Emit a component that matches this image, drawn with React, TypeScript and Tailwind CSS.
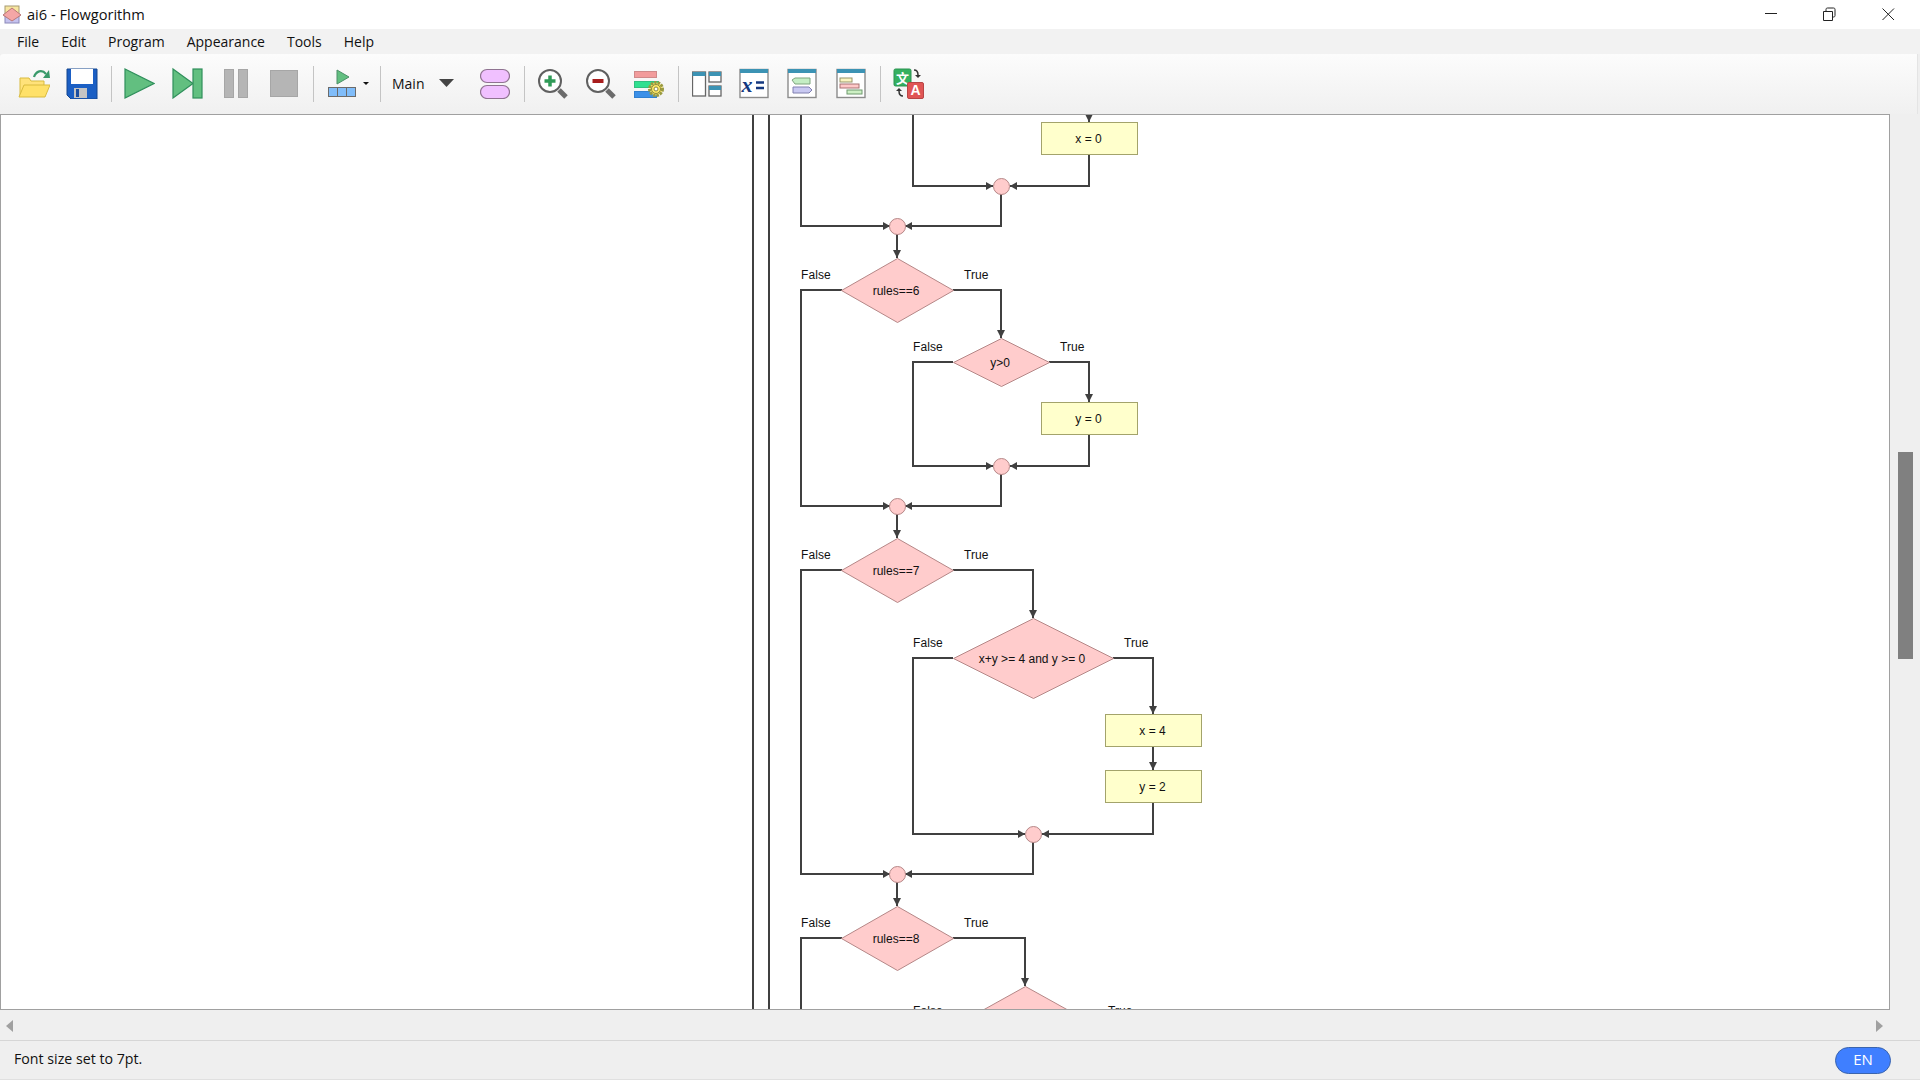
import type { ReactNode } from 'react';

const ui = { fontFamily: '"Open Sans", "Noto Sans", sans-serif' };
const chartFont = '"Liberation Sans", Arial, sans-serif';

const menus = ['File', 'Edit', 'Program', 'Appearance', 'Tools', 'Help'];

function Sep() {
  return <div className="w-px h-[36px] mt-[2px] bg-[#c4c4c4] shrink-0" />;
}

// 48px wide slot, the icon is centered in it
function Tool({ children }: { children: ReactNode }) {
  return <div className="flex items-center justify-center shrink-0 h-[32px] w-[48px]">{children}</div>;
}

function Icon({ children }: { children: ReactNode }) {
  return (
    <svg className="shrink-0" width="32" height="32" viewBox="0 0 32 32">
      {children}
    </svg>
  );
}

function WinFrame({ children }: { children: ReactNode }) {
  return (
    <Icon>
      <rect x="2" y="2.5" width="28" height="28" fill="#fff" stroke="#8c8c8c" strokeWidth="1.4" />
      <rect x="2" y="2" width="28" height="4" fill="#3c93b4" />
      {children}
    </Icon>
  );
}

function Logo() {
  return (
    <svg width="20" height="20" viewBox="0 0 20 20">
      <rect x="3" y="1" width="14" height="10" fill="#f7e6a0" stroke="#a89a70" />
      <rect x="3" y="11" width="14" height="7" fill="#c5c2ee" stroke="#8a88b8" />
      <polygon points="10,3 19,10 10,16 1,10" fill="#f4a6a6" stroke="#b87878" />
    </svg>
  );
}

function Diamond({ cx, cy, hw, hh, label }: { cx: number; cy: number; hw: number; hh: number; label: string }) {
  return (
    <g>
      <polygon
        points={`${cx},${cy - hh} ${cx + hw},${cy} ${cx},${cy + hh} ${cx - hw},${cy}`}
        fill="#ffcccc"
        stroke="#b58787"
      />
      <text x={cx - 1.5} y={cy + 4.5} textAnchor="middle" fontSize="12" fill="#111">
        {label}
      </text>
    </g>
  );
}

function Box({ x, y, label }: { x: number; y: number; label: string }) {
  return (
    <g>
      <rect x={x} y={y} width="96" height="32" fill="#ffffcc" stroke="#a3a36b" />
      <text x={x + 47} y={y + 20.5} textAnchor="middle" fontSize="12" fill="#111">
        {label}
      </text>
    </g>
  );
}

function Join({ cx, cy }: { cx: number; cy: number }) {
  return <circle cx={cx} cy={cy} r="8" fill="#ffcccc" stroke="#b58787" />;
}

function Down({ x, y }: { x: number; y: number }) {
  return <polygon points={`${x - 4},${y - 8} ${x + 4},${y - 8} ${x},${y}`} fill="#404040" />;
}

function Right({ x, y }: { x: number; y: number }) {
  return <polygon points={`${x - 7},${y - 4} ${x - 7},${y + 4} ${x},${y}`} fill="#404040" />;
}

function Left({ x, y }: { x: number; y: number }) {
  return <polygon points={`${x + 7},${y - 4} ${x + 7},${y + 4} ${x},${y}`} fill="#404040" />;
}

function Label({ x, y, children }: { x: number; y: number; children: string }) {
  return (
    <text x={x} y={y} fontSize="12" fill="#111" letterSpacing="0.1">
      {children}
    </text>
  );
}

function Chart() {
  const lines = [
    'M753 115V1010',
    'M769 115V1010',
    'M1089 115V122',
    'M1089 154V186H1010',
    'M913 115V186H993',
    'M1001 194V226H905',
    'M801 115V226H890',
    'M897 234V258',
    'M842 290H801V506H890',
    'M953 290H1001V338',
    'M953 362H913V466H993',
    'M1049 362H1089V402',
    'M1089 434V466H1010',
    'M1001 474V506H905',
    'M897 514V538',
    'M842 570H801V874H890',
    'M953 570H1033V618',
    'M953 658H913V834H1025',
    'M1113 658H1153V714',
    'M1153 746V770',
    'M1153 802V834H1042',
    'M1033 842V874H905',
    'M897 882V906',
    'M842 938H801V1010',
    'M953 938H1025V986',
  ];
  return (
    <svg className="block" width="1888" height="894" viewBox="1 115 1888 894" fontFamily={chartFont}>
      {lines.map((d) => (
        <path key={d} d={d} fill="none" stroke="#404040" strokeWidth="2" />
      ))}

      <Down x={1089} y={122} />
      <Box x={1041.5} y={122.5} label="x = 0" />
      <Right x={993} y={186} />
      <Left x={1010} y={186} />
      <Join cx={1001.5} cy={186.5} />
      <Right x={890} y={226} />
      <Left x={905} y={226} />
      <Join cx={897.5} cy={226.5} />

      <Down x={897} y={258} />
      <Diamond cx={897.5} cy={290.5} hw={56} hh={32} label="rules==6" />
      <Label x={801} y={279}>False</Label>
      <Label x={964} y={279}>True</Label>
      <Down x={1001} y={338} />
      <Diamond cx={1001.5} cy={362.5} hw={48} hh={24} label="y>0" />
      <Label x={913} y={351}>False</Label>
      <Label x={1060} y={351}>True</Label>
      <Down x={1089} y={402} />
      <Box x={1041.5} y={402.5} label="y = 0" />
      <Right x={993} y={466} />
      <Left x={1010} y={466} />
      <Join cx={1001.5} cy={466.5} />
      <Right x={890} y={506} />
      <Left x={905} y={506} />
      <Join cx={897.5} cy={506.5} />

      <Down x={897} y={538} />
      <Diamond cx={897.5} cy={570.5} hw={56} hh={32} label="rules==7" />
      <Label x={801} y={559}>False</Label>
      <Label x={964} y={559}>True</Label>
      <Down x={1033} y={618} />
      <Diamond cx={1033.5} cy={658.5} hw={80} hh={40} label="x+y >= 4 and y >= 0" />
      <Label x={913} y={647}>False</Label>
      <Label x={1124} y={647}>True</Label>
      <Down x={1153} y={714} />
      <Box x={1105.5} y={714.5} label="x = 4" />
      <Down x={1153} y={770} />
      <Box x={1105.5} y={770.5} label="y = 2" />
      <Right x={1025} y={834} />
      <Left x={1042} y={834} />
      <Join cx={1033.5} cy={834.5} />
      <Right x={890} y={874} />
      <Left x={905} y={874} />
      <Join cx={897.5} cy={874.5} />

      <Down x={897} y={906} />
      <Diamond cx={897.5} cy={938.5} hw={56} hh={32} label="rules==8" />
      <Label x={801} y={927}>False</Label>
      <Label x={964} y={927}>True</Label>
      <Down x={1025} y={986} />
      <Diamond cx={1025.5} cy={1026.5} hw={72} hh={40} label="" />
      <Label x={913} y={1015}>False</Label>
      <Label x={1108} y={1015}>True</Label>
    </svg>
  );
}

export default function App() {
  return (
    <div className="w-[1920px] h-[1080px] flex flex-col overflow-hidden bg-[#efefef] text-[#111]" style={ui}>
      {/* title bar */}
      <div className="h-[29px] bg-white flex items-center shrink-0 relative">
        <div className="ml-[2px] mr-[5px] flex">
          <Logo />
        </div>
        <span className="text-[14.6px]">ai6 - Flowgorithm</span>
        <div className="ml-auto flex items-center h-full">
          <svg width="160" height="29" viewBox="1760 0 160 29">
            <path d="M1765 13.5H1777" stroke="#222" fill="none" />
            <path d="M1823.5 11.5h9v9h-9z" stroke="#222" fill="none" />
            <path d="M1826 11V9.5c0-1 .5-1.500 1.500-1.500h6c1 0 1.500.5 1.500 1.500v6c0 1-.5 1.500-1.500 1.500H1833" stroke="#222" fill="none" />
            <path d="M1882.500 8.500L1894 20M1894 8.500L1882.500 20" stroke="#222" fill="none" />
          </svg>
        </div>
      </div>

      {/* menu */}
      <div className="h-[25px] flex items-center pl-[6px] bg-[#f2f2f2] shrink-0">
        {menus.map((m) => (
          <span key={m} className="px-[11px] text-[14px]">
            {m}
          </span>
        ))}
      </div>

      {/* toolbar */}
      <div className="h-[60px] shrink-0 mr-[2px] pb-[2px] rounded-tl-[3px] border-r border-[#e4e4e4] bg-gradient-to-b from-[#fcfcfc] to-[#f0f0f0] flex items-center pl-[10px]">
        <Tool>
          <Icon>
            <path d="M2 29V11h9l2 3h13v5" fill="#ffe27a" stroke="#d9bb3f" />
            <path d="M6 18h26l-5 12H1z" fill="#ffe169" stroke="#d9bb3f" />
            <path d="M16 10c2-6 8-8 12-3" fill="none" stroke="#3a9a6b" strokeWidth="2.200" />
            <polygon points="25,11 32,11 31,3" fill="#3a9a6b" />
          </Icon>
        </Tool>
        <Tool>
          <Icon>
            <path d="M1 2h30v30H5l-4-4z" fill="#1b5fc4" stroke="#15478f" />
            <rect x="5" y="2" width="22" height="15" fill="#fff" />
            <rect x="8" y="21" width="13" height="10" fill="#c4c4c4" />
            <rect x="10" y="22" width="3" height="8" fill="#1b4ea0" />
          </Icon>
        </Tool>
        <div className="w-[5px]" />
        <Sep />
        <div className="w-[3px]" />
        <Tool>
          <Icon>
            <polygon points="2,2 31,16.500 2,31" fill="#62bf80" stroke="#2f8f5b" strokeWidth="1.200" />
          </Icon>
        </Tool>
        <Tool>
          <Icon>
            <polygon points="2,2 22,16.500 2,31" fill="#62bf80" stroke="#2f8f5b" strokeWidth="1.200" />
            <rect x="22" y="2" width="9" height="29" fill="#62bf80" stroke="#2f8f5b" strokeWidth="1.200" />
          </Icon>
        </Tool>
        <div className="w-px" />
        <Tool>
          <Icon>
            <rect x="4.500" y="2.500" width="9" height="28" fill="#b5b5b5" stroke="#a6a6a6" />
            <rect x="18.500" y="2.500" width="9" height="28" fill="#b5b5b5" stroke="#a6a6a6" />
          </Icon>
        </Tool>
        <Tool>
          <Icon>
            <rect x="2.500" y="3.500" width="27" height="26" fill="#b5b5b5" stroke="#a6a6a6" />
          </Icon>
        </Tool>
        <div className="w-[5px]" />
        <Sep />
        <div className="w-[14px]" />
        <svg className="shrink-0" width="42" height="32" viewBox="0 0 42 32">
          <polygon points="9,3 21,10 9,17" fill="#62bf80" stroke="#4c8f68" />
          <rect x="0.500" y="20.500" width="27" height="9" fill="#80bdfa" stroke="#6b6b6b" />
          <path d="M9.500 20v10M18.500 20v10" stroke="#6b6b6b" />
          <polygon points="35,15 41,15 38,18" fill="#111" />
        </svg>
        <div className="w-[10px]" />
        <Sep />
        <span className="ml-[11px] text-[14px] w-[47px] shrink-0">Main</span>
        <svg className="shrink-0" width="15" height="8" viewBox="0 0 15 8">
          <polygon points="0,0 15,0 7.500,8" fill="#444" />
        </svg>
        <div className="w-[26px]" />
        <svg className="shrink-0" width="30" height="32" viewBox="0 0 30 32">
          <rect x="0.500" y="2.500" width="29" height="13" rx="6.500" fill="#f0c0ff" stroke="#8f7391" strokeWidth="1.200" />
          <rect x="0.500" y="18.500" width="29" height="13" rx="6.500" fill="#f0c0ff" stroke="#8f7391" strokeWidth="1.200" />
        </svg>
        <div className="w-[14px]" />
        <Sep />
        <div className="w-[13px]" />
        <Icon>
          <path d="M21 23l7 7" stroke="#6b6b6b" strokeWidth="5" />
          <circle cx="12" cy="14" r="11" fill="#fff" stroke="#606060" strokeWidth="2" />
          <path d="M12 8.500v11M6.500 14h11" stroke="#2f9a57" strokeWidth="3.500" />
        </Icon>
        <div className="w-[16px]" />
        <Icon>
          <path d="M21 23l7 7" stroke="#6b6b6b" strokeWidth="5" />
          <circle cx="12" cy="14" r="11" fill="#fff" stroke="#606060" strokeWidth="2" />
          <path d="M6.500 14h11" stroke="#a81e1e" strokeWidth="4" />
        </Icon>
        <div className="w-[16px]" />
        <Icon>
          <rect x="0.500" y="4.500" width="22" height="6" fill="#f29c9c" stroke="#d08a8a" />
          <rect x="0.500" y="14.500" width="24" height="6" fill="#30e090" stroke="#30c080" />
          <rect x="0.500" y="24.500" width="22" height="6" fill="#3c90e8" stroke="#3080d0" />
          <circle cx="22" cy="22" r="6.500" fill="#ffe866" stroke="#9a9a40" strokeWidth="3" strokeDasharray="2.500 1" />
          <circle cx="22" cy="22" r="4.500" fill="#ffe866" stroke="#8a8a40" />
          <circle cx="22" cy="22" r="2" fill="#fff" stroke="#8a8a40" />
        </Icon>
        <div className="w-[12px]" />
        <Sep />
        <div className="w-[13px]" />
        <svg className="shrink-0" width="30" height="32" viewBox="0 0 30 32">
          <rect x="0.500" y="5" width="13" height="24" fill="#fff" stroke="#666" strokeWidth="1.300" />
          <rect x="0.500" y="5" width="13" height="4" fill="#3c93b4" />
          <rect x="17" y="5" width="12" height="10" fill="#fff" stroke="#666" strokeWidth="1.300" />
          <rect x="17" y="5" width="12" height="4" fill="#3c93b4" />
          <rect x="17" y="19" width="12" height="10" fill="#fff" stroke="#666" strokeWidth="1.300" />
          <rect x="17" y="19" width="12" height="4" fill="#3c93b4" />
        </svg>
        <div className="w-[16px]" />
        <WinFrame>
          <text x="9" y="25" fontSize="22" fontWeight="700" fontStyle="italic" fontFamily='"Liberation Serif", serif' textAnchor="middle" fill="#14387f">
            x
          </text>
          <path d="M18 15.500h8M18 21h8" stroke="#14387f" strokeWidth="2.500" />
        </WinFrame>
        <div className="w-[16px]" />
        <WinFrame>
          <polygon points="9,11 24,11 24,17 9,17 6,13" fill="#c4eec4" stroke="#7fa57f" />
          <polygon points="7,20 23,20 26,23 23,26 7,26" fill="#c9c9f2" stroke="#8080b0" />
        </WinFrame>
        <div className="w-[17px]" />
        <WinFrame>
          <rect x="5" y="11" width="12" height="4" fill="#fbf5c0" stroke="#97956a" />
          <rect x="5" y="17" width="19" height="4" fill="#ffc8c8" stroke="#a87272" />
          <rect x="12" y="23" width="15" height="4" fill="#cdf0c4" stroke="#6f9a6f" />
        </WinFrame>
        <div className="w-[13px]" />
        <Sep />
        <div className="w-[12px]" />
        <Icon>
          <rect x="1" y="2" width="17" height="17" rx="1.500" fill="#34b060" stroke="#2a9350" />
          <text x="9.500" y="15.500" fontSize="13" fontWeight="700" textAnchor="middle" fontFamily='"Noto Sans CJK SC", sans-serif' fill="#fff">
            文
          </text>
          <path d="M21 3c3 0 4 2 4 5" fill="none" stroke="#333" strokeWidth="1.500" />
          <polygon points="22,8 28,8 25,11" fill="#333" />
          <path d="M10 29c-3 0-4-2-4-5" fill="none" stroke="#333" strokeWidth="1.500" />
          <polygon points="3,24 9,24 6,21" fill="#333" />
          <rect x="14.500" y="15.500" width="16" height="16" rx="1.500" fill="#e05555" stroke="#b84545" />
          <text x="22.500" y="28" fontSize="14" fontWeight="700" textAnchor="middle" fontFamily={chartFont} fill="#fff">
            A
          </text>
        </Icon>
      </div>

      {/* canvas + vertical scrollbar */}
      <div className="flex flex-1 min-h-0">
        <div className="w-[1890px] h-[896px] shrink-0 bg-white border border-[#a0a0a0] overflow-hidden">
          <Chart />
        </div>
        <div className="flex-1 pt-[338px] pl-[8px] pr-[7px]">
          <div className="h-[207px] bg-[#808080]" />
        </div>
      </div>

      {/* horizontal scrollbar */}
      <div className="h-[30px] shrink-0 flex items-center justify-between pl-[6px] pr-[37px] border-b border-[#d6d6d6]">
        <div className="w-0 h-0 border-y-[6px] border-y-transparent border-r-[7px] border-r-[#a0a0a0]" />
        <div className="w-0 h-0 border-y-[6px] border-y-transparent border-l-[7px] border-l-[#a0a0a0]" />
      </div>

      {/* status bar */}
      <div className="h-[39px] shrink-0 flex items-center justify-between pl-[14px] pr-[29px] border-b border-[#e0e0e0]">
        <span className="text-[14.2px] pb-[2px]">Font size set to 7pt.</span>
        <div className="w-[56px] h-[27px] pb-[1px] rounded-full bg-[#3f7fff] border border-[#3a64ad] text-white text-[15px] flex items-center justify-center">
          EN
        </div>
      </div>
    </div>
  );
}
